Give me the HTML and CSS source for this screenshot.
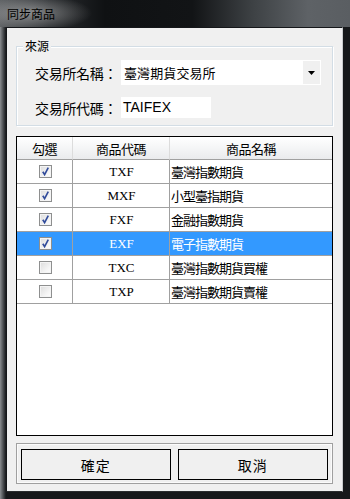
FILE: index.html
```html
<!DOCTYPE html>
<html>
<head>
<meta charset="utf-8">
<link rel="stylesheet" href="styles.css">
</head>
<body>
<div class="window">
  <div class="titlebar"><span class="title">同步商品</span></div>
  <div class="frame">
    <div class="client">
      <div class="group">
        <span class="legend">來源</span>
        <div class="field-row">
          <label class="field-label">交易所名稱：</label>
          <div class="combo">
            <span class="combo-text">臺灣期貨交易所</span>
            <span class="combo-btn"><svg width="7" height="4" viewBox="0 0 7 4"><path d="M0 0H7L3.5 4Z" fill="#000"/></svg></span>
          </div>
        </div>
        <div class="field-row">
          <label class="field-label">交易所代碼：</label>
          <div class="textbox">TAIFEX</div>
        </div>
      </div>

      <div class="grid">
        <div class="grid-row header">
          <div class="cell">勾選</div>
          <div class="cell">商品代碼</div>
          <div class="cell">商品名稱</div>
        </div>
        <div class="grid-row">
          <div class="cell"><span class="chk checked"></span></div>
          <div class="cell code">TXF</div>
          <div class="cell name">臺灣指數期貨</div>
        </div>
        <div class="grid-row">
          <div class="cell"><span class="chk checked"></span></div>
          <div class="cell code">MXF</div>
          <div class="cell name">小型臺指期貨</div>
        </div>
        <div class="grid-row">
          <div class="cell"><span class="chk checked"></span></div>
          <div class="cell code">FXF</div>
          <div class="cell name">金融指數期貨</div>
        </div>
        <div class="grid-row selected">
          <div class="cell"><span class="chk checked"></span></div>
          <div class="cell code">EXF</div>
          <div class="cell name">電子指數期貨</div>
        </div>
        <div class="grid-row">
          <div class="cell"><span class="chk"></span></div>
          <div class="cell code">TXC</div>
          <div class="cell name">臺灣指數期貨買權</div>
        </div>
        <div class="grid-row">
          <div class="cell"><span class="chk"></span></div>
          <div class="cell code">TXP</div>
          <div class="cell name">臺灣指數期貨賣權</div>
        </div>
      </div>

      <div class="buttons">
        <button class="btn">確定</button>
        <button class="btn">取消</button>
      </div>
    </div>
  </div>
</div>
</body>
</html>
```

FILE: styles.css
```css
* { box-sizing: border-box; }
html, body { margin: 0; padding: 0; }
body {
  width: 350px;
  height: 499px;
  background: #1c1f22;
  font-family: "Noto Sans CJK TC", "Noto Sans", sans-serif;
  overflow: hidden;
}
.window {
  width: 350px;
  height: 499px;
  display: flex;
  flex-direction: column;
  background: linear-gradient(90deg, #8a8d90 0px, #3a3d40 4px, #16181a 6px, #16181a 100%);
}
.titlebar {
  height: 27px;
  flex: none;
  display: flex;
  align-items: center;
  padding-left: 7px;
  background:
    radial-gradient(ellipse 60px 18px at 32px 13px, rgba(200,200,200,0.55), rgba(200,200,200,0) 100%),
    linear-gradient(90deg, #5a5d60 0%, #2a2d30 14%, #0f1113 30%, #121416 55%, #3d4144 72%, #5e6266 88%, #5a5e62 100%);
}
.title {
  font-size: 12px;
  color: #000;
  line-height: 14px;
}
.frame {
  flex: 1;
  padding: 0 7px 7px 6px;
}
.client {
  height: 100%;
  background: #f0f0f0;
  border: 1px solid #15171a;
  border-right-color: #c9cbcd;
  border-bottom-color: #2a2c2e;
  display: flex;
  flex-direction: column;
  padding-left: 9px;
}
.group {
  position: relative;
  margin-top: 18px;
  width: 317px;
  border: 1px solid #d3dde5;
  box-shadow: inset 1px 1px 0 #fff, 1px 1px 0 #fff;
  padding: 13px 10px 7px 18px;
  display: flex;
  flex-direction: column;
  gap: 12px;
}
.legend {
  position: absolute;
  top: -9px;
  left: 6px;
  padding: 0 2px;
  background: #f0f0f0;
  font-size: 12px;
  line-height: 16px;
  color: #000;
}
.field-row {
  display: flex;
  align-items: center;
}
.field-label {
  width: 86px;
  font-size: 14px;
  color: #000;
  white-space: nowrap;
  letter-spacing: -0.3px;
}
.combo {
  width: 200px;
  height: 25px;
  background: #fff;
  display: flex;
  align-items: center;
}
.combo-text {
  flex: 1;
  padding-left: 3px;
  font-size: 13px;
  letter-spacing: 0.1px;
  color: #000;
}
.combo-btn {
  width: 17px;
  height: 23px;
  margin-right: 1px;
  background: #f0f0f0;
  display: flex;
  align-items: center;
  justify-content: center;
}
.textbox {
  width: 90px;
  height: 21px;
  background: #fff;
  font-family: "Liberation Sans", Arial, sans-serif;
  font-size: 14px;
  line-height: 21px;
  padding-left: 2px;
  color: #000;
}
.grid {
  margin-top: 10px;
  width: 317px;
  height: 300px;
  border: 1px solid #000;
  background: #fff;
}
.grid-row {
  display: grid;
  grid-template-columns: 56px 97px 1fr;
  height: 24px;
}
.grid-row.header {
  height: 23px;
  background: linear-gradient(#ffffff, #f4f5f6 50%, #e9eaec);
}
.cell {
  border-right: 1px solid #a0a0a0;
  border-bottom: 1px solid #a0a0a0;
  display: flex;
  align-items: center;
  justify-content: center;
  font-size: 13px;
  letter-spacing: -1px;
  color: #000;
  white-space: nowrap;
}
.header .cell {
  border-right-color: #dcdcdc;
  border-bottom-color: #a0a0a0;
  font-size: 13px;
  letter-spacing: -0.5px;
}
.cell:last-child { border-right: none; }
.cell.code {
  font-family: "Liberation Serif", "Times New Roman", serif;
  font-size: 13px;
  letter-spacing: 0;
  padding-left: 1px;
}
.cell.name {
  justify-content: flex-start;
  padding-left: 1px;
}
.selected .cell {
  background: #3399ff;
  color: #fff;
}
.chk {
  width: 13px;
  height: 13px;
  border: 1px solid #8e8f8f;
  background: linear-gradient(135deg, #dcdcdc, #f6f6f6 70%, #fdfdfd);
  box-shadow: inset 0 0 0 1px #f4f4f4;
  position: relative;
  margin-left: 1px;
}
.chk.checked::after {
  content: "";
  position: absolute;
  left: 2px;
  top: 1px;
  width: 7px;
  height: 9px;
  background: url("data:image/svg+xml;utf8,<svg xmlns='http://www.w3.org/2000/svg' width='7' height='9' viewBox='0 0 7 9'><path d='M0.8 4.8 L2.6 7.6 L6.3 0.6' fill='none' stroke='%23324c9b' stroke-width='1.7'/></svg>") no-repeat;
}
.buttons {
  margin-top: 7px;
  width: 317px;
  height: 41px;
  border: 1px solid #a0a0a0;
  box-shadow: inset 0 0 0 1px #fbfbfb;
  padding: 5px 4px 3px 4px;
  display: flex;
  gap: 7px;
}
.btn {
  width: 150px;
  height: 31px;
  border: 1px solid #000;
  background: #f0f0f0;
  box-shadow: inset 0 0 0 1px #f0f0f0;
  font-family: "Noto Sans CJK TC", sans-serif;
  font-size: 14px;
  color: #000;
  padding: 0;
  letter-spacing: 1px;
}
.btn + .btn { width: 151px; }
```
